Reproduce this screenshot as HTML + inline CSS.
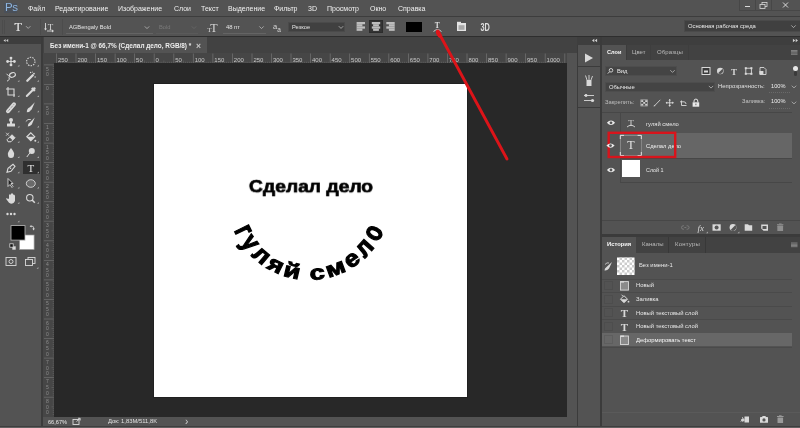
<!DOCTYPE html>
<html><head><meta charset="utf-8">
<style>
*{margin:0;padding:0;box-sizing:border-box}
html,body{width:800px;height:428px;overflow:hidden;background:#535353;font-family:"Liberation Sans",sans-serif;color:#d6d6d6}
.a{position:absolute}
.t{position:absolute;white-space:nowrap;line-height:1;will-change:transform}
svg{position:absolute;left:0;top:0;will-change:transform}
</style></head><body>
<div class="a" style="left:0px;top:0px;width:800px;height:17px;background:#535353;"></div>
<div class="a" style="left:0px;top:16px;width:800px;height:1px;background:#3d3d3d;"></div>
<div class="a" style="left:4px;top:3px;width:13px;height:10px;background:#4a5059;"></div>
<div class="t" style="left:4.6px;top:2.2px;font-size:11.5px;color:#8db4de;letter-spacing:-0.3px">Ps</div>
<div class="t" style="left:28px;top:5.27px;font-size:7px;color:#f0f0f0;">Файл</div>
<div class="t" style="left:54.5px;top:5.27px;font-size:7px;color:#f0f0f0;">Редактирование</div>
<div class="t" style="left:118px;top:5.27px;font-size:7px;color:#f0f0f0;">Изображение</div>
<div class="t" style="left:174px;top:5.27px;font-size:7px;color:#f0f0f0;">Слои</div>
<div class="t" style="left:201px;top:5.27px;font-size:7px;color:#f0f0f0;">Текст</div>
<div class="t" style="left:227.5px;top:5.27px;font-size:7px;color:#f0f0f0;">Выделение</div>
<div class="t" style="left:274px;top:5.27px;font-size:7px;color:#f0f0f0;">Фильтр</div>
<div class="t" style="left:308px;top:5.27px;font-size:7px;color:#f0f0f0;">3D</div>
<div class="t" style="left:327px;top:5.27px;font-size:7px;color:#f0f0f0;">Просмотр</div>
<div class="t" style="left:370px;top:5.27px;font-size:7px;color:#f0f0f0;">Окно</div>
<div class="t" style="left:398px;top:5.27px;font-size:7px;color:#f0f0f0;">Справка</div>
<div class="a" style="left:739px;top:0px;width:1px;height:11px;background:#474747;"></div>
<div class="a" style="left:755px;top:0px;width:1px;height:11px;background:#474747;"></div>
<div class="a" style="left:771px;top:0px;width:1px;height:11px;background:#474747;"></div>
<div class="a" style="left:739px;top:10px;width:61px;height:1px;background:#474747;"></div>
<div class="a" style="left:0px;top:17px;width:800px;height:19px;background:#535353;"></div>
<div class="a" style="left:0px;top:36px;width:800px;height:1px;background:#2e2e2e;"></div>
<div class="a" style="left:40px;top:19px;width:1px;height:16px;background:#4c4c4c;"></div>
<div class="a" style="left:62px;top:19px;width:1px;height:16px;background:#4c4c4c;"></div>
<div class="t" style="left:69px;top:24.73px;font-size:5.75px;color:#e5e5e5;">AGBengaly Bold</div>
<div class="a" style="left:66px;top:33px;width:87px;height:1px;background:#646464;"></div>
<div class="t" style="left:159px;top:24.73px;font-size:5.75px;color:#7a7a7a;">Bold</div>
<div class="a" style="left:156px;top:33px;width:42px;height:1px;background:#5a5a5a;"></div>
<div class="t" style="left:226px;top:24.65px;font-size:5.85px;color:#e5e5e5;">48 пт</div>
<div class="a" style="left:223px;top:33px;width:43px;height:1px;background:#646464;"></div>
<div class="a" style="left:288px;top:22px;width:57px;height:10px;background:#404040;border:1px solid #4a4a4a"></div>
<div class="t" style="left:292px;top:24.57px;font-size:5.7px;color:#e5e5e5;">Резкое</div>
<div class="a" style="left:369px;top:20.4px;width:14px;height:13px;background:#333333;border:1px solid #2c2c2c"></div>
<div class="a" style="left:406px;top:22px;width:16px;height:10px;background:#000000;"></div>
<div class="a" style="left:684px;top:20px;width:117px;height:12px;background:#404040;border:1px solid #4a4a4a"></div>
<div class="t" style="left:688px;top:24.29px;font-size:5.8px;color:#e8e8e8;">Основная рабочая среда</div>
<div class="a" style="left:0px;top:37px;width:41px;height:391px;background:#535353;"></div>
<div class="a" style="left:0px;top:37px;width:41px;height:7px;background:#3e3e3e;"></div>
<div class="a" style="left:41px;top:37px;width:2px;height:391px;background:#3b3b3b;"></div>
<div class="a" style="left:22.5px;top:161.3px;width:17.5px;height:13px;background:#2f2f2f;"></div>
<div class="a" style="left:43px;top:37px;width:534px;height:16px;background:#424242;"></div>
<div class="a" style="left:44px;top:37px;width:163px;height:16px;background:#535353;"></div>
<div class="t" style="left:50px;top:43.08px;font-size:6.4px;color:#eeeeee;font-weight:bold">Без имени-1 @ 66,7% (Сделал дело, RGB/8) *</div>
<div class="t" style="left:195.5px;top:41.60px;font-size:8.5px;color:#c8c8c8;font-weight:bold">×</div>
<div class="a" style="left:43px;top:53px;width:524px;height:10px;background:#464646;"></div>
<div class="a" style="left:43px;top:53px;width:11px;height:364px;background:#464646;"></div>
<div class="a" style="left:54px;top:63px;width:513px;height:354px;background:#282828;"></div>
<div class="a" style="left:153px;top:83px;width:315px;height:315px;background:#202020;"></div>
<div class="a" style="left:154px;top:84px;width:313px;height:313px;background:#ffffff;"></div>
<div class="a" style="left:43px;top:417px;width:524px;height:9px;background:#535353;"></div>
<div class="t" style="left:48px;top:419.66px;font-size:5.6px;color:#e8e8e8;">66,67%</div>
<div class="t" style="left:108px;top:419.45px;font-size:5.85px;color:#e0e0e0;">Док: 1,83M/511,8K</div>
<div class="t" style="left:185px;top:416.54px;font-size:10px;color:#d0d0d0;">›</div>
<div class="a" style="left:567px;top:53px;width:10px;height:372px;background:#535353;"></div>
<div class="a" style="left:577px;top:37px;width:1px;height:391px;background:#3b3b3b;"></div>
<div class="a" style="left:577px;top:37px;width:223px;height:8px;background:#3e3e3e;"></div>
<div class="a" style="left:578px;top:45px;width:22px;height:383px;background:#535353;"></div>
<div class="a" style="left:578px;top:66px;width:22px;height:1px;background:#3b3b3b;"></div>
<div class="a" style="left:578px;top:107px;width:22px;height:1px;background:#3b3b3b;"></div>
<div class="a" style="left:600px;top:37px;width:2px;height:391px;background:#3b3b3b;"></div>
<div class="a" style="left:602px;top:45px;width:198px;height:189px;background:#535353;"></div>
<div class="a" style="left:602px;top:45px;width:198px;height:15px;background:#424242;"></div>
<div class="a" style="left:602px;top:45px;width:25px;height:15px;background:#535353;"></div>
<div class="a" style="left:626px;top:45px;width:1px;height:15px;background:#3c3c3c;"></div>
<div class="a" style="left:650px;top:45px;width:1px;height:15px;background:#3e3e3e;"></div>
<div class="a" style="left:688px;top:45px;width:1px;height:15px;background:#3e3e3e;"></div>
<div class="t" style="left:607px;top:49.96px;font-size:5.6px;color:#f7f7f7;font-weight:bold">Слои</div>
<div class="t" style="left:632px;top:49.12px;font-size:6.0px;color:#bcbcbc;">Цвет</div>
<div class="t" style="left:657px;top:49.12px;font-size:6.0px;color:#bcbcbc;letter-spacing:0.12px">Образцы</div>
<div class="a" style="left:604.5px;top:66px;width:72px;height:10px;background:#444444;border:1px solid #4d4d4d"></div>
<div class="t" style="left:616.5px;top:68.59px;font-size:5.8px;color:#e9e9e9;">Вид</div>
<div class="a" style="left:604.5px;top:81.7px;width:110px;height:10px;background:#444444;border:1px solid #4d4d4d"></div>
<div class="t" style="left:609px;top:84.89px;font-size:5.8px;color:#e9e9e9;">Обычные</div>
<div class="t" style="left:718px;top:83.66px;font-size:5.95px;color:#e0e0e0;">Непрозрачность:</div>
<div class="t" style="left:771px;top:83.92px;font-size:5.65px;color:#ededed;">100%</div>
<div class="a" style="left:769px;top:91.5px;width:21px;height:1px;background:transparent;border-top:1px dotted #6a6a6a"></div>
<div class="t" style="left:605px;top:100.09px;font-size:5.8px;color:#bdbdbd;">Закрепить:</div>
<div class="t" style="left:742px;top:99.42px;font-size:5.65px;color:#c4c4c4;">Заливка:</div>
<div class="t" style="left:771px;top:99.42px;font-size:5.65px;color:#ededed;">100%</div>
<div class="a" style="left:769px;top:107.5px;width:21px;height:1px;background:transparent;border-top:1px dotted #6a6a6a"></div>
<div class="a" style="left:602px;top:112px;width:190px;height:1px;background:#474747;"></div>
<div class="a" style="left:620px;top:112px;width:1px;height:70px;background:#484848;"></div>
<div class="a" style="left:620px;top:133px;width:172px;height:1px;background:#474747;"></div>
<div class="a" style="left:620px;top:133px;width:172px;height:25px;background:#666666;"></div>
<div class="a" style="left:620px;top:158px;width:172px;height:1px;background:#474747;"></div>
<div class="a" style="left:620px;top:182px;width:172px;height:1px;background:#474747;"></div>
<div class="t" style="left:646px;top:121.69px;font-size:5.8px;color:#e8e8e8;">гуляй смело</div>
<div class="t" style="left:646px;top:143.83px;font-size:5.75px;color:#f2f2f2;">Сделал дело</div>
<div class="t" style="left:646px;top:167.53px;font-size:5.4px;color:#e8e8e8;">Слой 1</div>
<div class="a" style="left:622px;top:159.5px;width:18px;height:17px;background:#ffffff;"></div>
<div class="a" style="left:602px;top:220px;width:198px;height:14px;background:#535353;border-top:1px solid #474747"></div>
<div class="a" style="left:602px;top:234px;width:198px;height:3px;background:#3b3b3b;"></div>
<div class="a" style="left:602px;top:237px;width:198px;height:16px;background:#424242;"></div>
<div class="a" style="left:602px;top:237px;width:34px;height:16px;background:#535353;"></div>
<div class="a" style="left:668px;top:237px;width:1px;height:16px;background:#383838;"></div>
<div class="a" style="left:705px;top:237px;width:1px;height:16px;background:#383838;"></div>
<div class="t" style="left:606.8px;top:242.09px;font-size:5.8px;color:#f7f7f7;font-weight:bold">История</div>
<div class="t" style="left:642px;top:241.32px;font-size:6.0px;color:#bcbcbc;letter-spacing:0.05px">Каналы</div>
<div class="t" style="left:674.5px;top:241.32px;font-size:6.0px;color:#bcbcbc;letter-spacing:0.2px">Контуры</div>
<div class="t" style="left:638.6px;top:263.41px;font-size:5.9px;color:#e8e8e8;">Без имени-1</div>
<div class="a" style="left:602px;top:278.5px;width:190px;height:1px;background:#4a4a4a;"></div>
<div class="a" style="left:604px;top:281.0px;width:9px;height:9px;background:transparent;border:1px solid #4d4d4d"></div>
<div class="t" style="left:636.2px;top:283.45px;font-size:5.85px;color:#e7e7e7;">Новый</div>
<div class="a" style="left:602px;top:292.1px;width:190px;height:1px;background:#4a4a4a;"></div>
<div class="a" style="left:604px;top:294.6px;width:9px;height:9px;background:transparent;border:1px solid #4d4d4d"></div>
<div class="t" style="left:636.2px;top:297.05px;font-size:5.85px;color:#e7e7e7;">Заливка</div>
<div class="a" style="left:602px;top:305.7px;width:190px;height:1px;background:#4a4a4a;"></div>
<div class="a" style="left:604px;top:308.2px;width:9px;height:9px;background:transparent;border:1px solid #4d4d4d"></div>
<div class="t" style="left:636.2px;top:310.65px;font-size:5.85px;color:#e7e7e7;">Новый текстовый слой</div>
<div class="a" style="left:602px;top:319.3px;width:190px;height:1px;background:#4a4a4a;"></div>
<div class="a" style="left:604px;top:321.8px;width:9px;height:9px;background:transparent;border:1px solid #4d4d4d"></div>
<div class="t" style="left:636.2px;top:324.25px;font-size:5.85px;color:#e7e7e7;">Новый текстовый слой</div>
<div class="a" style="left:602px;top:332.9px;width:190px;height:1px;background:#4a4a4a;"></div>
<div class="a" style="left:602px;top:332.9px;width:190px;height:13.6px;background:#676767;"></div>
<div class="a" style="left:604px;top:335.4px;width:9px;height:9px;background:transparent;border:1px solid #5e5e5e"></div>
<div class="t" style="left:636.2px;top:337.85px;font-size:5.85px;color:#f7f7f7;">Деформировать текст</div>
<div class="a" style="left:602px;top:346.5px;width:190px;height:1px;background:#4a4a4a;"></div>
<div class="a" style="left:602px;top:412px;width:198px;height:13px;background:#535353;border-top:1px solid #5a5a5a"></div>
<div class="a" style="left:0px;top:426px;width:800px;height:1px;background:#3e3e3e;"></div>
<div class="a" style="left:0px;top:427px;width:800px;height:1px;background:#616161;"></div>
<div class="t" style="left:248.5px;top:177.8px;font-size:18px;font-weight:bold;color:#000;-webkit-text-stroke:0.7px #000;transform:scale(1.07,0.95);transform-origin:0 0">Сделал дело</div>
<svg width="800" height="428">
<g font-family="Liberation Sans" font-weight="bold" font-size="19.5" fill="#000" stroke="#000" stroke-width="0.95"><text transform="translate(236.03,234.19) rotate(63.87) scale(1.109,1.494)" text-anchor="middle">г</text><text transform="translate(243.95,247.13) rotate(53.19) scale(1.198,1.355)" text-anchor="middle">у</text><text transform="translate(256.73,260.66) rotate(40.08) scale(1.285,1.219)" text-anchor="middle">л</text><text transform="translate(272.81,271.23) rotate(26.52) scale(1.350,1.118)" text-anchor="middle">я</text><text transform="translate(290.61,277.65) rotate(13.19) scale(1.388,1.059)" text-anchor="middle">й</text><text transform="translate(317.77,279.35) rotate(-6.04) scale(1.397,1.044)" text-anchor="middle">с</text><text transform="translate(337.68,274.66) rotate(-20.45) scale(1.370,1.087)" text-anchor="middle">м</text><text transform="translate(355.79,265.17) rotate(-34.87) scale(1.313,1.175)" text-anchor="middle">е</text><text transform="translate(369.75,252.85) rotate(-47.98) scale(1.236,1.296)" text-anchor="middle">л</text><text transform="translate(380.96,236.93) rotate(-61.71) scale(1.129,1.464)" text-anchor="middle">о</text></g>
<rect x="56.1" y="53.5" width="0.8" height="9.5" fill="#6e6e6e"/>
<rect x="58.0" y="61.7" width="0.6" height="1.3" fill="#666"/>
<rect x="60.0" y="61.7" width="0.6" height="1.3" fill="#666"/>
<rect x="61.9" y="61.7" width="0.6" height="1.3" fill="#666"/>
<rect x="63.9" y="61.7" width="0.6" height="1.3" fill="#666"/>
<rect x="65.8" y="60.5" width="0.6" height="2.5" fill="#666"/>
<rect x="67.8" y="61.7" width="0.6" height="1.3" fill="#666"/>
<rect x="69.7" y="61.7" width="0.6" height="1.3" fill="#666"/>
<rect x="71.7" y="61.7" width="0.6" height="1.3" fill="#666"/>
<rect x="73.6" y="61.7" width="0.6" height="1.3" fill="#666"/>
<text x="57.9" y="62" font-family="Liberation Sans" font-size="6" fill="#c8c8c8">250</text>
<rect x="75.6" y="53.5" width="0.8" height="9.5" fill="#6e6e6e"/>
<rect x="77.6" y="61.7" width="0.6" height="1.3" fill="#666"/>
<rect x="79.5" y="61.7" width="0.6" height="1.3" fill="#666"/>
<rect x="81.5" y="61.7" width="0.6" height="1.3" fill="#666"/>
<rect x="83.4" y="61.7" width="0.6" height="1.3" fill="#666"/>
<rect x="85.4" y="60.5" width="0.6" height="2.5" fill="#666"/>
<rect x="87.3" y="61.7" width="0.6" height="1.3" fill="#666"/>
<rect x="89.3" y="61.7" width="0.6" height="1.3" fill="#666"/>
<rect x="91.2" y="61.7" width="0.6" height="1.3" fill="#666"/>
<rect x="93.2" y="61.7" width="0.6" height="1.3" fill="#666"/>
<text x="77.4" y="62" font-family="Liberation Sans" font-size="6" fill="#c8c8c8">200</text>
<rect x="95.2" y="53.5" width="0.8" height="9.5" fill="#6e6e6e"/>
<rect x="97.1" y="61.7" width="0.6" height="1.3" fill="#666"/>
<rect x="99.1" y="61.7" width="0.6" height="1.3" fill="#666"/>
<rect x="101.0" y="61.7" width="0.6" height="1.3" fill="#666"/>
<rect x="103.0" y="61.7" width="0.6" height="1.3" fill="#666"/>
<rect x="104.9" y="60.5" width="0.6" height="2.5" fill="#666"/>
<rect x="106.9" y="61.7" width="0.6" height="1.3" fill="#666"/>
<rect x="108.8" y="61.7" width="0.6" height="1.3" fill="#666"/>
<rect x="110.8" y="61.7" width="0.6" height="1.3" fill="#666"/>
<rect x="112.7" y="61.7" width="0.6" height="1.3" fill="#666"/>
<text x="97.0" y="62" font-family="Liberation Sans" font-size="6" fill="#c8c8c8">150</text>
<rect x="114.7" y="53.5" width="0.8" height="9.5" fill="#6e6e6e"/>
<rect x="116.7" y="61.7" width="0.6" height="1.3" fill="#666"/>
<rect x="118.6" y="61.7" width="0.6" height="1.3" fill="#666"/>
<rect x="120.6" y="61.7" width="0.6" height="1.3" fill="#666"/>
<rect x="122.5" y="61.7" width="0.6" height="1.3" fill="#666"/>
<rect x="124.5" y="60.5" width="0.6" height="2.5" fill="#666"/>
<rect x="126.4" y="61.7" width="0.6" height="1.3" fill="#666"/>
<rect x="128.4" y="61.7" width="0.6" height="1.3" fill="#666"/>
<rect x="130.3" y="61.7" width="0.6" height="1.3" fill="#666"/>
<rect x="132.3" y="61.7" width="0.6" height="1.3" fill="#666"/>
<text x="116.5" y="62" font-family="Liberation Sans" font-size="6" fill="#c8c8c8">100</text>
<rect x="134.2" y="53.5" width="0.8" height="9.5" fill="#6e6e6e"/>
<rect x="136.2" y="61.7" width="0.6" height="1.3" fill="#666"/>
<rect x="138.2" y="61.7" width="0.6" height="1.3" fill="#666"/>
<rect x="140.1" y="61.7" width="0.6" height="1.3" fill="#666"/>
<rect x="142.1" y="61.7" width="0.6" height="1.3" fill="#666"/>
<rect x="144.0" y="60.5" width="0.6" height="2.5" fill="#666"/>
<rect x="146.0" y="61.7" width="0.6" height="1.3" fill="#666"/>
<rect x="147.9" y="61.7" width="0.6" height="1.3" fill="#666"/>
<rect x="149.9" y="61.7" width="0.6" height="1.3" fill="#666"/>
<rect x="151.8" y="61.7" width="0.6" height="1.3" fill="#666"/>
<text x="136.1" y="62" font-family="Liberation Sans" font-size="6" fill="#c8c8c8">50</text>
<rect x="153.8" y="53.5" width="0.8" height="9.5" fill="#6e6e6e"/>
<rect x="155.8" y="61.7" width="0.6" height="1.3" fill="#666"/>
<rect x="157.7" y="61.7" width="0.6" height="1.3" fill="#666"/>
<rect x="159.7" y="61.7" width="0.6" height="1.3" fill="#666"/>
<rect x="161.6" y="61.7" width="0.6" height="1.3" fill="#666"/>
<rect x="163.6" y="60.5" width="0.6" height="2.5" fill="#666"/>
<rect x="165.5" y="61.7" width="0.6" height="1.3" fill="#666"/>
<rect x="167.5" y="61.7" width="0.6" height="1.3" fill="#666"/>
<rect x="169.4" y="61.7" width="0.6" height="1.3" fill="#666"/>
<rect x="171.4" y="61.7" width="0.6" height="1.3" fill="#666"/>
<text x="155.6" y="62" font-family="Liberation Sans" font-size="6" fill="#c8c8c8">0</text>
<rect x="173.4" y="53.5" width="0.8" height="9.5" fill="#6e6e6e"/>
<rect x="175.3" y="61.7" width="0.6" height="1.3" fill="#666"/>
<rect x="177.3" y="61.7" width="0.6" height="1.3" fill="#666"/>
<rect x="179.2" y="61.7" width="0.6" height="1.3" fill="#666"/>
<rect x="181.2" y="61.7" width="0.6" height="1.3" fill="#666"/>
<rect x="183.1" y="60.5" width="0.6" height="2.5" fill="#666"/>
<rect x="185.1" y="61.7" width="0.6" height="1.3" fill="#666"/>
<rect x="187.0" y="61.7" width="0.6" height="1.3" fill="#666"/>
<rect x="189.0" y="61.7" width="0.6" height="1.3" fill="#666"/>
<rect x="190.9" y="61.7" width="0.6" height="1.3" fill="#666"/>
<text x="175.2" y="62" font-family="Liberation Sans" font-size="6" fill="#c8c8c8">50</text>
<rect x="192.9" y="53.5" width="0.8" height="9.5" fill="#6e6e6e"/>
<rect x="194.9" y="61.7" width="0.6" height="1.3" fill="#666"/>
<rect x="196.8" y="61.7" width="0.6" height="1.3" fill="#666"/>
<rect x="198.8" y="61.7" width="0.6" height="1.3" fill="#666"/>
<rect x="200.7" y="61.7" width="0.6" height="1.3" fill="#666"/>
<rect x="202.7" y="60.5" width="0.6" height="2.5" fill="#666"/>
<rect x="204.6" y="61.7" width="0.6" height="1.3" fill="#666"/>
<rect x="206.6" y="61.7" width="0.6" height="1.3" fill="#666"/>
<rect x="208.5" y="61.7" width="0.6" height="1.3" fill="#666"/>
<rect x="210.5" y="61.7" width="0.6" height="1.3" fill="#666"/>
<text x="194.7" y="62" font-family="Liberation Sans" font-size="6" fill="#c8c8c8">100</text>
<rect x="212.5" y="53.5" width="0.8" height="9.5" fill="#6e6e6e"/>
<rect x="214.4" y="61.7" width="0.6" height="1.3" fill="#666"/>
<rect x="216.4" y="61.7" width="0.6" height="1.3" fill="#666"/>
<rect x="218.3" y="61.7" width="0.6" height="1.3" fill="#666"/>
<rect x="220.3" y="61.7" width="0.6" height="1.3" fill="#666"/>
<rect x="222.2" y="60.5" width="0.6" height="2.5" fill="#666"/>
<rect x="224.2" y="61.7" width="0.6" height="1.3" fill="#666"/>
<rect x="226.1" y="61.7" width="0.6" height="1.3" fill="#666"/>
<rect x="228.1" y="61.7" width="0.6" height="1.3" fill="#666"/>
<rect x="230.0" y="61.7" width="0.6" height="1.3" fill="#666"/>
<text x="214.3" y="62" font-family="Liberation Sans" font-size="6" fill="#c8c8c8">150</text>
<rect x="232.0" y="53.5" width="0.8" height="9.5" fill="#6e6e6e"/>
<rect x="234.0" y="61.7" width="0.6" height="1.3" fill="#666"/>
<rect x="235.9" y="61.7" width="0.6" height="1.3" fill="#666"/>
<rect x="237.9" y="61.7" width="0.6" height="1.3" fill="#666"/>
<rect x="239.8" y="61.7" width="0.6" height="1.3" fill="#666"/>
<rect x="241.8" y="60.5" width="0.6" height="2.5" fill="#666"/>
<rect x="243.7" y="61.7" width="0.6" height="1.3" fill="#666"/>
<rect x="245.7" y="61.7" width="0.6" height="1.3" fill="#666"/>
<rect x="247.6" y="61.7" width="0.6" height="1.3" fill="#666"/>
<rect x="249.6" y="61.7" width="0.6" height="1.3" fill="#666"/>
<text x="233.8" y="62" font-family="Liberation Sans" font-size="6" fill="#c8c8c8">200</text>
<rect x="251.6" y="53.5" width="0.8" height="9.5" fill="#6e6e6e"/>
<rect x="253.5" y="61.7" width="0.6" height="1.3" fill="#666"/>
<rect x="255.5" y="61.7" width="0.6" height="1.3" fill="#666"/>
<rect x="257.4" y="61.7" width="0.6" height="1.3" fill="#666"/>
<rect x="259.4" y="61.7" width="0.6" height="1.3" fill="#666"/>
<rect x="261.3" y="60.5" width="0.6" height="2.5" fill="#666"/>
<rect x="263.3" y="61.7" width="0.6" height="1.3" fill="#666"/>
<rect x="265.2" y="61.7" width="0.6" height="1.3" fill="#666"/>
<rect x="267.2" y="61.7" width="0.6" height="1.3" fill="#666"/>
<rect x="269.1" y="61.7" width="0.6" height="1.3" fill="#666"/>
<text x="253.4" y="62" font-family="Liberation Sans" font-size="6" fill="#c8c8c8">250</text>
<rect x="271.1" y="53.5" width="0.8" height="9.5" fill="#6e6e6e"/>
<rect x="273.1" y="61.7" width="0.6" height="1.3" fill="#666"/>
<rect x="275.0" y="61.7" width="0.6" height="1.3" fill="#666"/>
<rect x="277.0" y="61.7" width="0.6" height="1.3" fill="#666"/>
<rect x="278.9" y="61.7" width="0.6" height="1.3" fill="#666"/>
<rect x="280.9" y="60.5" width="0.6" height="2.5" fill="#666"/>
<rect x="282.8" y="61.7" width="0.6" height="1.3" fill="#666"/>
<rect x="284.8" y="61.7" width="0.6" height="1.3" fill="#666"/>
<rect x="286.7" y="61.7" width="0.6" height="1.3" fill="#666"/>
<rect x="288.7" y="61.7" width="0.6" height="1.3" fill="#666"/>
<text x="272.9" y="62" font-family="Liberation Sans" font-size="6" fill="#c8c8c8">300</text>
<rect x="290.6" y="53.5" width="0.8" height="9.5" fill="#6e6e6e"/>
<rect x="292.6" y="61.7" width="0.6" height="1.3" fill="#666"/>
<rect x="294.6" y="61.7" width="0.6" height="1.3" fill="#666"/>
<rect x="296.5" y="61.7" width="0.6" height="1.3" fill="#666"/>
<rect x="298.5" y="61.7" width="0.6" height="1.3" fill="#666"/>
<rect x="300.4" y="60.5" width="0.6" height="2.5" fill="#666"/>
<rect x="302.4" y="61.7" width="0.6" height="1.3" fill="#666"/>
<rect x="304.3" y="61.7" width="0.6" height="1.3" fill="#666"/>
<rect x="306.3" y="61.7" width="0.6" height="1.3" fill="#666"/>
<rect x="308.2" y="61.7" width="0.6" height="1.3" fill="#666"/>
<text x="292.4" y="62" font-family="Liberation Sans" font-size="6" fill="#c8c8c8">350</text>
<rect x="310.2" y="53.5" width="0.8" height="9.5" fill="#6e6e6e"/>
<rect x="312.2" y="61.7" width="0.6" height="1.3" fill="#666"/>
<rect x="314.1" y="61.7" width="0.6" height="1.3" fill="#666"/>
<rect x="316.1" y="61.7" width="0.6" height="1.3" fill="#666"/>
<rect x="318.0" y="61.7" width="0.6" height="1.3" fill="#666"/>
<rect x="320.0" y="60.5" width="0.6" height="2.5" fill="#666"/>
<rect x="321.9" y="61.7" width="0.6" height="1.3" fill="#666"/>
<rect x="323.9" y="61.7" width="0.6" height="1.3" fill="#666"/>
<rect x="325.8" y="61.7" width="0.6" height="1.3" fill="#666"/>
<rect x="327.8" y="61.7" width="0.6" height="1.3" fill="#666"/>
<text x="312.0" y="62" font-family="Liberation Sans" font-size="6" fill="#c8c8c8">400</text>
<rect x="329.8" y="53.5" width="0.8" height="9.5" fill="#6e6e6e"/>
<rect x="331.7" y="61.7" width="0.6" height="1.3" fill="#666"/>
<rect x="333.7" y="61.7" width="0.6" height="1.3" fill="#666"/>
<rect x="335.6" y="61.7" width="0.6" height="1.3" fill="#666"/>
<rect x="337.6" y="61.7" width="0.6" height="1.3" fill="#666"/>
<rect x="339.5" y="60.5" width="0.6" height="2.5" fill="#666"/>
<rect x="341.5" y="61.7" width="0.6" height="1.3" fill="#666"/>
<rect x="343.4" y="61.7" width="0.6" height="1.3" fill="#666"/>
<rect x="345.4" y="61.7" width="0.6" height="1.3" fill="#666"/>
<rect x="347.3" y="61.7" width="0.6" height="1.3" fill="#666"/>
<text x="331.6" y="62" font-family="Liberation Sans" font-size="6" fill="#c8c8c8">450</text>
<rect x="349.3" y="53.5" width="0.8" height="9.5" fill="#6e6e6e"/>
<rect x="351.3" y="61.7" width="0.6" height="1.3" fill="#666"/>
<rect x="353.2" y="61.7" width="0.6" height="1.3" fill="#666"/>
<rect x="355.2" y="61.7" width="0.6" height="1.3" fill="#666"/>
<rect x="357.1" y="61.7" width="0.6" height="1.3" fill="#666"/>
<rect x="359.1" y="60.5" width="0.6" height="2.5" fill="#666"/>
<rect x="361.0" y="61.7" width="0.6" height="1.3" fill="#666"/>
<rect x="363.0" y="61.7" width="0.6" height="1.3" fill="#666"/>
<rect x="364.9" y="61.7" width="0.6" height="1.3" fill="#666"/>
<rect x="366.9" y="61.7" width="0.6" height="1.3" fill="#666"/>
<text x="351.1" y="62" font-family="Liberation Sans" font-size="6" fill="#c8c8c8">500</text>
<rect x="368.9" y="53.5" width="0.8" height="9.5" fill="#6e6e6e"/>
<rect x="370.8" y="61.7" width="0.6" height="1.3" fill="#666"/>
<rect x="372.8" y="61.7" width="0.6" height="1.3" fill="#666"/>
<rect x="374.7" y="61.7" width="0.6" height="1.3" fill="#666"/>
<rect x="376.7" y="61.7" width="0.6" height="1.3" fill="#666"/>
<rect x="378.6" y="60.5" width="0.6" height="2.5" fill="#666"/>
<rect x="380.6" y="61.7" width="0.6" height="1.3" fill="#666"/>
<rect x="382.5" y="61.7" width="0.6" height="1.3" fill="#666"/>
<rect x="384.5" y="61.7" width="0.6" height="1.3" fill="#666"/>
<rect x="386.4" y="61.7" width="0.6" height="1.3" fill="#666"/>
<text x="370.7" y="62" font-family="Liberation Sans" font-size="6" fill="#c8c8c8">550</text>
<rect x="388.4" y="53.5" width="0.8" height="9.5" fill="#6e6e6e"/>
<rect x="390.4" y="61.7" width="0.6" height="1.3" fill="#666"/>
<rect x="392.3" y="61.7" width="0.6" height="1.3" fill="#666"/>
<rect x="394.3" y="61.7" width="0.6" height="1.3" fill="#666"/>
<rect x="396.2" y="61.7" width="0.6" height="1.3" fill="#666"/>
<rect x="398.2" y="60.5" width="0.6" height="2.5" fill="#666"/>
<rect x="400.1" y="61.7" width="0.6" height="1.3" fill="#666"/>
<rect x="402.1" y="61.7" width="0.6" height="1.3" fill="#666"/>
<rect x="404.0" y="61.7" width="0.6" height="1.3" fill="#666"/>
<rect x="406.0" y="61.7" width="0.6" height="1.3" fill="#666"/>
<text x="390.2" y="62" font-family="Liberation Sans" font-size="6" fill="#c8c8c8">600</text>
<rect x="408.0" y="53.5" width="0.8" height="9.5" fill="#6e6e6e"/>
<rect x="409.9" y="61.7" width="0.6" height="1.3" fill="#666"/>
<rect x="411.9" y="61.7" width="0.6" height="1.3" fill="#666"/>
<rect x="413.8" y="61.7" width="0.6" height="1.3" fill="#666"/>
<rect x="415.8" y="61.7" width="0.6" height="1.3" fill="#666"/>
<rect x="417.7" y="60.5" width="0.6" height="2.5" fill="#666"/>
<rect x="419.7" y="61.7" width="0.6" height="1.3" fill="#666"/>
<rect x="421.6" y="61.7" width="0.6" height="1.3" fill="#666"/>
<rect x="423.6" y="61.7" width="0.6" height="1.3" fill="#666"/>
<rect x="425.5" y="61.7" width="0.6" height="1.3" fill="#666"/>
<text x="409.8" y="62" font-family="Liberation Sans" font-size="6" fill="#c8c8c8">650</text>
<rect x="427.5" y="53.5" width="0.8" height="9.5" fill="#6e6e6e"/>
<rect x="429.5" y="61.7" width="0.6" height="1.3" fill="#666"/>
<rect x="431.4" y="61.7" width="0.6" height="1.3" fill="#666"/>
<rect x="433.4" y="61.7" width="0.6" height="1.3" fill="#666"/>
<rect x="435.3" y="61.7" width="0.6" height="1.3" fill="#666"/>
<rect x="437.3" y="60.5" width="0.6" height="2.5" fill="#666"/>
<rect x="439.2" y="61.7" width="0.6" height="1.3" fill="#666"/>
<rect x="441.2" y="61.7" width="0.6" height="1.3" fill="#666"/>
<rect x="443.1" y="61.7" width="0.6" height="1.3" fill="#666"/>
<rect x="445.1" y="61.7" width="0.6" height="1.3" fill="#666"/>
<text x="429.3" y="62" font-family="Liberation Sans" font-size="6" fill="#c8c8c8">700</text>
<rect x="447.1" y="53.5" width="0.8" height="9.5" fill="#6e6e6e"/>
<rect x="449.0" y="61.7" width="0.6" height="1.3" fill="#666"/>
<rect x="451.0" y="61.7" width="0.6" height="1.3" fill="#666"/>
<rect x="452.9" y="61.7" width="0.6" height="1.3" fill="#666"/>
<rect x="454.9" y="61.7" width="0.6" height="1.3" fill="#666"/>
<rect x="456.8" y="60.5" width="0.6" height="2.5" fill="#666"/>
<rect x="458.8" y="61.7" width="0.6" height="1.3" fill="#666"/>
<rect x="460.7" y="61.7" width="0.6" height="1.3" fill="#666"/>
<rect x="462.7" y="61.7" width="0.6" height="1.3" fill="#666"/>
<rect x="464.6" y="61.7" width="0.6" height="1.3" fill="#666"/>
<text x="448.9" y="62" font-family="Liberation Sans" font-size="6" fill="#c8c8c8">750</text>
<rect x="466.6" y="53.5" width="0.8" height="9.5" fill="#6e6e6e"/>
<rect x="468.6" y="61.7" width="0.6" height="1.3" fill="#666"/>
<rect x="470.5" y="61.7" width="0.6" height="1.3" fill="#666"/>
<rect x="472.5" y="61.7" width="0.6" height="1.3" fill="#666"/>
<rect x="474.4" y="61.7" width="0.6" height="1.3" fill="#666"/>
<rect x="476.4" y="60.5" width="0.6" height="2.5" fill="#666"/>
<rect x="478.3" y="61.7" width="0.6" height="1.3" fill="#666"/>
<rect x="480.3" y="61.7" width="0.6" height="1.3" fill="#666"/>
<rect x="482.2" y="61.7" width="0.6" height="1.3" fill="#666"/>
<rect x="484.2" y="61.7" width="0.6" height="1.3" fill="#666"/>
<text x="468.4" y="62" font-family="Liberation Sans" font-size="6" fill="#c8c8c8">800</text>
<rect x="486.2" y="53.5" width="0.8" height="9.5" fill="#6e6e6e"/>
<rect x="488.1" y="61.7" width="0.6" height="1.3" fill="#666"/>
<rect x="490.1" y="61.7" width="0.6" height="1.3" fill="#666"/>
<rect x="492.0" y="61.7" width="0.6" height="1.3" fill="#666"/>
<rect x="494.0" y="61.7" width="0.6" height="1.3" fill="#666"/>
<rect x="495.9" y="60.5" width="0.6" height="2.5" fill="#666"/>
<rect x="497.9" y="61.7" width="0.6" height="1.3" fill="#666"/>
<rect x="499.8" y="61.7" width="0.6" height="1.3" fill="#666"/>
<rect x="501.8" y="61.7" width="0.6" height="1.3" fill="#666"/>
<rect x="503.7" y="61.7" width="0.6" height="1.3" fill="#666"/>
<text x="488.0" y="62" font-family="Liberation Sans" font-size="6" fill="#c8c8c8">850</text>
<rect x="505.7" y="53.5" width="0.8" height="9.5" fill="#6e6e6e"/>
<rect x="507.7" y="61.7" width="0.6" height="1.3" fill="#666"/>
<rect x="509.6" y="61.7" width="0.6" height="1.3" fill="#666"/>
<rect x="511.6" y="61.7" width="0.6" height="1.3" fill="#666"/>
<rect x="513.5" y="61.7" width="0.6" height="1.3" fill="#666"/>
<rect x="515.5" y="60.5" width="0.6" height="2.5" fill="#666"/>
<rect x="517.4" y="61.7" width="0.6" height="1.3" fill="#666"/>
<rect x="519.4" y="61.7" width="0.6" height="1.3" fill="#666"/>
<rect x="521.3" y="61.7" width="0.6" height="1.3" fill="#666"/>
<rect x="523.3" y="61.7" width="0.6" height="1.3" fill="#666"/>
<text x="507.5" y="62" font-family="Liberation Sans" font-size="6" fill="#c8c8c8">900</text>
<rect x="525.2" y="53.5" width="0.8" height="9.5" fill="#6e6e6e"/>
<rect x="527.2" y="61.7" width="0.6" height="1.3" fill="#666"/>
<rect x="529.2" y="61.7" width="0.6" height="1.3" fill="#666"/>
<rect x="531.1" y="61.7" width="0.6" height="1.3" fill="#666"/>
<rect x="533.1" y="61.7" width="0.6" height="1.3" fill="#666"/>
<rect x="535.0" y="60.5" width="0.6" height="2.5" fill="#666"/>
<rect x="537.0" y="61.7" width="0.6" height="1.3" fill="#666"/>
<rect x="538.9" y="61.7" width="0.6" height="1.3" fill="#666"/>
<rect x="540.9" y="61.7" width="0.6" height="1.3" fill="#666"/>
<rect x="542.8" y="61.7" width="0.6" height="1.3" fill="#666"/>
<text x="527.0" y="62" font-family="Liberation Sans" font-size="6" fill="#c8c8c8">950</text>
<rect x="544.8" y="53.5" width="0.8" height="9.5" fill="#6e6e6e"/>
<rect x="546.8" y="61.7" width="0.6" height="1.3" fill="#666"/>
<rect x="548.7" y="61.7" width="0.6" height="1.3" fill="#666"/>
<rect x="550.7" y="61.7" width="0.6" height="1.3" fill="#666"/>
<rect x="552.6" y="61.7" width="0.6" height="1.3" fill="#666"/>
<rect x="554.6" y="60.5" width="0.6" height="2.5" fill="#666"/>
<rect x="556.5" y="61.7" width="0.6" height="1.3" fill="#666"/>
<rect x="558.5" y="61.7" width="0.6" height="1.3" fill="#666"/>
<rect x="560.4" y="61.7" width="0.6" height="1.3" fill="#666"/>
<rect x="562.4" y="61.7" width="0.6" height="1.3" fill="#666"/>
<text x="546.6" y="62" font-family="Liberation Sans" font-size="6" fill="#c8c8c8">1000</text>
<rect x="564.4" y="53.5" width="0.8" height="9.5" fill="#6e6e6e"/>
<rect x="44" y="64.5" width="10" height="0.8" fill="#6a6a6a"/>
<rect x="52.7" y="66.4" width="1.3" height="0.6" fill="#666"/>
<rect x="52.7" y="68.4" width="1.3" height="0.6" fill="#666"/>
<rect x="52.7" y="70.3" width="1.3" height="0.6" fill="#666"/>
<rect x="52.7" y="72.3" width="1.3" height="0.6" fill="#666"/>
<rect x="51.5" y="74.2" width="2.5" height="0.6" fill="#666"/>
<rect x="52.7" y="76.2" width="1.3" height="0.6" fill="#666"/>
<rect x="52.7" y="78.1" width="1.3" height="0.6" fill="#666"/>
<rect x="52.7" y="80.1" width="1.3" height="0.6" fill="#666"/>
<rect x="52.7" y="82.0" width="1.3" height="0.6" fill="#666"/>
<text x="47.5" y="70.7" font-family="Liberation Sans" font-size="5" fill="#8c8c8c" text-anchor="middle">5</text>
<text x="47.5" y="76.2" font-family="Liberation Sans" font-size="5" fill="#8c8c8c" text-anchor="middle">0</text>
<rect x="44" y="84.0" width="10" height="0.8" fill="#6a6a6a"/>
<rect x="52.7" y="86.0" width="1.3" height="0.6" fill="#666"/>
<rect x="52.7" y="87.9" width="1.3" height="0.6" fill="#666"/>
<rect x="52.7" y="89.9" width="1.3" height="0.6" fill="#666"/>
<rect x="52.7" y="91.8" width="1.3" height="0.6" fill="#666"/>
<rect x="51.5" y="93.8" width="2.5" height="0.6" fill="#666"/>
<rect x="52.7" y="95.7" width="1.3" height="0.6" fill="#666"/>
<rect x="52.7" y="97.7" width="1.3" height="0.6" fill="#666"/>
<rect x="52.7" y="99.6" width="1.3" height="0.6" fill="#666"/>
<rect x="52.7" y="101.6" width="1.3" height="0.6" fill="#666"/>
<text x="47.5" y="90.2" font-family="Liberation Sans" font-size="5" fill="#8c8c8c" text-anchor="middle">0</text>
<rect x="44" y="103.5" width="10" height="0.8" fill="#6a6a6a"/>
<rect x="52.7" y="105.5" width="1.3" height="0.6" fill="#666"/>
<rect x="52.7" y="107.5" width="1.3" height="0.6" fill="#666"/>
<rect x="52.7" y="109.4" width="1.3" height="0.6" fill="#666"/>
<rect x="52.7" y="111.4" width="1.3" height="0.6" fill="#666"/>
<rect x="51.5" y="113.3" width="2.5" height="0.6" fill="#666"/>
<rect x="52.7" y="115.3" width="1.3" height="0.6" fill="#666"/>
<rect x="52.7" y="117.2" width="1.3" height="0.6" fill="#666"/>
<rect x="52.7" y="119.2" width="1.3" height="0.6" fill="#666"/>
<rect x="52.7" y="121.1" width="1.3" height="0.6" fill="#666"/>
<text x="47.5" y="109.8" font-family="Liberation Sans" font-size="5" fill="#8c8c8c" text-anchor="middle">5</text>
<text x="47.5" y="115.3" font-family="Liberation Sans" font-size="5" fill="#8c8c8c" text-anchor="middle">0</text>
<rect x="44" y="123.1" width="10" height="0.8" fill="#6a6a6a"/>
<rect x="52.7" y="125.1" width="1.3" height="0.6" fill="#666"/>
<rect x="52.7" y="127.0" width="1.3" height="0.6" fill="#666"/>
<rect x="52.7" y="129.0" width="1.3" height="0.6" fill="#666"/>
<rect x="52.7" y="130.9" width="1.3" height="0.6" fill="#666"/>
<rect x="51.5" y="132.9" width="2.5" height="0.6" fill="#666"/>
<rect x="52.7" y="134.8" width="1.3" height="0.6" fill="#666"/>
<rect x="52.7" y="136.8" width="1.3" height="0.6" fill="#666"/>
<rect x="52.7" y="138.7" width="1.3" height="0.6" fill="#666"/>
<rect x="52.7" y="140.7" width="1.3" height="0.6" fill="#666"/>
<text x="47.5" y="129.3" font-family="Liberation Sans" font-size="5" fill="#8c8c8c" text-anchor="middle">1</text>
<text x="47.5" y="134.9" font-family="Liberation Sans" font-size="5" fill="#8c8c8c" text-anchor="middle">0</text>
<text x="47.5" y="140.5" font-family="Liberation Sans" font-size="5" fill="#8c8c8c" text-anchor="middle">0</text>
<rect x="44" y="142.7" width="10" height="0.8" fill="#6a6a6a"/>
<rect x="52.7" y="144.6" width="1.3" height="0.6" fill="#666"/>
<rect x="52.7" y="146.6" width="1.3" height="0.6" fill="#666"/>
<rect x="52.7" y="148.5" width="1.3" height="0.6" fill="#666"/>
<rect x="52.7" y="150.5" width="1.3" height="0.6" fill="#666"/>
<rect x="51.5" y="152.4" width="2.5" height="0.6" fill="#666"/>
<rect x="52.7" y="154.4" width="1.3" height="0.6" fill="#666"/>
<rect x="52.7" y="156.3" width="1.3" height="0.6" fill="#666"/>
<rect x="52.7" y="158.3" width="1.3" height="0.6" fill="#666"/>
<rect x="52.7" y="160.2" width="1.3" height="0.6" fill="#666"/>
<text x="47.5" y="148.8" font-family="Liberation Sans" font-size="5" fill="#8c8c8c" text-anchor="middle">1</text>
<text x="47.5" y="154.4" font-family="Liberation Sans" font-size="5" fill="#8c8c8c" text-anchor="middle">5</text>
<text x="47.5" y="160.0" font-family="Liberation Sans" font-size="5" fill="#8c8c8c" text-anchor="middle">0</text>
<rect x="44" y="162.2" width="10" height="0.8" fill="#6a6a6a"/>
<rect x="52.7" y="164.2" width="1.3" height="0.6" fill="#666"/>
<rect x="52.7" y="166.1" width="1.3" height="0.6" fill="#666"/>
<rect x="52.7" y="168.1" width="1.3" height="0.6" fill="#666"/>
<rect x="52.7" y="170.0" width="1.3" height="0.6" fill="#666"/>
<rect x="51.5" y="172.0" width="2.5" height="0.6" fill="#666"/>
<rect x="52.7" y="173.9" width="1.3" height="0.6" fill="#666"/>
<rect x="52.7" y="175.9" width="1.3" height="0.6" fill="#666"/>
<rect x="52.7" y="177.8" width="1.3" height="0.6" fill="#666"/>
<rect x="52.7" y="179.8" width="1.3" height="0.6" fill="#666"/>
<text x="47.5" y="168.4" font-family="Liberation Sans" font-size="5" fill="#8c8c8c" text-anchor="middle">2</text>
<text x="47.5" y="174.0" font-family="Liberation Sans" font-size="5" fill="#8c8c8c" text-anchor="middle">0</text>
<text x="47.5" y="179.6" font-family="Liberation Sans" font-size="5" fill="#8c8c8c" text-anchor="middle">0</text>
<rect x="44" y="181.8" width="10" height="0.8" fill="#6a6a6a"/>
<rect x="52.7" y="183.7" width="1.3" height="0.6" fill="#666"/>
<rect x="52.7" y="185.7" width="1.3" height="0.6" fill="#666"/>
<rect x="52.7" y="187.6" width="1.3" height="0.6" fill="#666"/>
<rect x="52.7" y="189.6" width="1.3" height="0.6" fill="#666"/>
<rect x="51.5" y="191.5" width="2.5" height="0.6" fill="#666"/>
<rect x="52.7" y="193.5" width="1.3" height="0.6" fill="#666"/>
<rect x="52.7" y="195.4" width="1.3" height="0.6" fill="#666"/>
<rect x="52.7" y="197.4" width="1.3" height="0.6" fill="#666"/>
<rect x="52.7" y="199.3" width="1.3" height="0.6" fill="#666"/>
<text x="47.5" y="187.9" font-family="Liberation Sans" font-size="5" fill="#8c8c8c" text-anchor="middle">2</text>
<text x="47.5" y="193.5" font-family="Liberation Sans" font-size="5" fill="#8c8c8c" text-anchor="middle">5</text>
<text x="47.5" y="199.1" font-family="Liberation Sans" font-size="5" fill="#8c8c8c" text-anchor="middle">0</text>
<rect x="44" y="201.3" width="10" height="0.8" fill="#6a6a6a"/>
<rect x="52.7" y="203.3" width="1.3" height="0.6" fill="#666"/>
<rect x="52.7" y="205.2" width="1.3" height="0.6" fill="#666"/>
<rect x="52.7" y="207.2" width="1.3" height="0.6" fill="#666"/>
<rect x="52.7" y="209.1" width="1.3" height="0.6" fill="#666"/>
<rect x="51.5" y="211.1" width="2.5" height="0.6" fill="#666"/>
<rect x="52.7" y="213.0" width="1.3" height="0.6" fill="#666"/>
<rect x="52.7" y="215.0" width="1.3" height="0.6" fill="#666"/>
<rect x="52.7" y="216.9" width="1.3" height="0.6" fill="#666"/>
<rect x="52.7" y="218.9" width="1.3" height="0.6" fill="#666"/>
<text x="47.5" y="207.5" font-family="Liberation Sans" font-size="5" fill="#8c8c8c" text-anchor="middle">3</text>
<text x="47.5" y="213.1" font-family="Liberation Sans" font-size="5" fill="#8c8c8c" text-anchor="middle">0</text>
<text x="47.5" y="218.7" font-family="Liberation Sans" font-size="5" fill="#8c8c8c" text-anchor="middle">0</text>
<rect x="44" y="220.8" width="10" height="0.8" fill="#6a6a6a"/>
<rect x="52.7" y="222.8" width="1.3" height="0.6" fill="#666"/>
<rect x="52.7" y="224.8" width="1.3" height="0.6" fill="#666"/>
<rect x="52.7" y="226.7" width="1.3" height="0.6" fill="#666"/>
<rect x="52.7" y="228.7" width="1.3" height="0.6" fill="#666"/>
<rect x="51.5" y="230.6" width="2.5" height="0.6" fill="#666"/>
<rect x="52.7" y="232.6" width="1.3" height="0.6" fill="#666"/>
<rect x="52.7" y="234.5" width="1.3" height="0.6" fill="#666"/>
<rect x="52.7" y="236.5" width="1.3" height="0.6" fill="#666"/>
<rect x="52.7" y="238.4" width="1.3" height="0.6" fill="#666"/>
<text x="47.5" y="227.0" font-family="Liberation Sans" font-size="5" fill="#8c8c8c" text-anchor="middle">3</text>
<text x="47.5" y="232.6" font-family="Liberation Sans" font-size="5" fill="#8c8c8c" text-anchor="middle">5</text>
<text x="47.5" y="238.2" font-family="Liberation Sans" font-size="5" fill="#8c8c8c" text-anchor="middle">0</text>
<rect x="44" y="240.4" width="10" height="0.8" fill="#6a6a6a"/>
<rect x="52.7" y="242.4" width="1.3" height="0.6" fill="#666"/>
<rect x="52.7" y="244.3" width="1.3" height="0.6" fill="#666"/>
<rect x="52.7" y="246.3" width="1.3" height="0.6" fill="#666"/>
<rect x="52.7" y="248.2" width="1.3" height="0.6" fill="#666"/>
<rect x="51.5" y="250.2" width="2.5" height="0.6" fill="#666"/>
<rect x="52.7" y="252.1" width="1.3" height="0.6" fill="#666"/>
<rect x="52.7" y="254.1" width="1.3" height="0.6" fill="#666"/>
<rect x="52.7" y="256.0" width="1.3" height="0.6" fill="#666"/>
<rect x="52.7" y="258.0" width="1.3" height="0.6" fill="#666"/>
<text x="47.5" y="246.6" font-family="Liberation Sans" font-size="5" fill="#8c8c8c" text-anchor="middle">4</text>
<text x="47.5" y="252.2" font-family="Liberation Sans" font-size="5" fill="#8c8c8c" text-anchor="middle">0</text>
<text x="47.5" y="257.8" font-family="Liberation Sans" font-size="5" fill="#8c8c8c" text-anchor="middle">0</text>
<rect x="44" y="260.0" width="10" height="0.8" fill="#6a6a6a"/>
<rect x="52.7" y="261.9" width="1.3" height="0.6" fill="#666"/>
<rect x="52.7" y="263.9" width="1.3" height="0.6" fill="#666"/>
<rect x="52.7" y="265.8" width="1.3" height="0.6" fill="#666"/>
<rect x="52.7" y="267.8" width="1.3" height="0.6" fill="#666"/>
<rect x="51.5" y="269.7" width="2.5" height="0.6" fill="#666"/>
<rect x="52.7" y="271.7" width="1.3" height="0.6" fill="#666"/>
<rect x="52.7" y="273.6" width="1.3" height="0.6" fill="#666"/>
<rect x="52.7" y="275.6" width="1.3" height="0.6" fill="#666"/>
<rect x="52.7" y="277.5" width="1.3" height="0.6" fill="#666"/>
<text x="47.5" y="266.2" font-family="Liberation Sans" font-size="5" fill="#8c8c8c" text-anchor="middle">4</text>
<text x="47.5" y="271.8" font-family="Liberation Sans" font-size="5" fill="#8c8c8c" text-anchor="middle">5</text>
<text x="47.5" y="277.4" font-family="Liberation Sans" font-size="5" fill="#8c8c8c" text-anchor="middle">0</text>
<rect x="44" y="279.5" width="10" height="0.8" fill="#6a6a6a"/>
<rect x="52.7" y="281.5" width="1.3" height="0.6" fill="#666"/>
<rect x="52.7" y="283.4" width="1.3" height="0.6" fill="#666"/>
<rect x="52.7" y="285.4" width="1.3" height="0.6" fill="#666"/>
<rect x="52.7" y="287.3" width="1.3" height="0.6" fill="#666"/>
<rect x="51.5" y="289.3" width="2.5" height="0.6" fill="#666"/>
<rect x="52.7" y="291.2" width="1.3" height="0.6" fill="#666"/>
<rect x="52.7" y="293.2" width="1.3" height="0.6" fill="#666"/>
<rect x="52.7" y="295.1" width="1.3" height="0.6" fill="#666"/>
<rect x="52.7" y="297.1" width="1.3" height="0.6" fill="#666"/>
<text x="47.5" y="285.7" font-family="Liberation Sans" font-size="5" fill="#8c8c8c" text-anchor="middle">5</text>
<text x="47.5" y="291.3" font-family="Liberation Sans" font-size="5" fill="#8c8c8c" text-anchor="middle">0</text>
<text x="47.5" y="296.9" font-family="Liberation Sans" font-size="5" fill="#8c8c8c" text-anchor="middle">0</text>
<rect x="44" y="299.1" width="10" height="0.8" fill="#6a6a6a"/>
<rect x="52.7" y="301.0" width="1.3" height="0.6" fill="#666"/>
<rect x="52.7" y="303.0" width="1.3" height="0.6" fill="#666"/>
<rect x="52.7" y="304.9" width="1.3" height="0.6" fill="#666"/>
<rect x="52.7" y="306.9" width="1.3" height="0.6" fill="#666"/>
<rect x="51.5" y="308.8" width="2.5" height="0.6" fill="#666"/>
<rect x="52.7" y="310.8" width="1.3" height="0.6" fill="#666"/>
<rect x="52.7" y="312.7" width="1.3" height="0.6" fill="#666"/>
<rect x="52.7" y="314.7" width="1.3" height="0.6" fill="#666"/>
<rect x="52.7" y="316.6" width="1.3" height="0.6" fill="#666"/>
<text x="47.5" y="305.2" font-family="Liberation Sans" font-size="5" fill="#8c8c8c" text-anchor="middle">5</text>
<text x="47.5" y="310.9" font-family="Liberation Sans" font-size="5" fill="#8c8c8c" text-anchor="middle">5</text>
<text x="47.5" y="316.4" font-family="Liberation Sans" font-size="5" fill="#8c8c8c" text-anchor="middle">0</text>
<rect x="44" y="318.6" width="10" height="0.8" fill="#6a6a6a"/>
<rect x="52.7" y="320.6" width="1.3" height="0.6" fill="#666"/>
<rect x="52.7" y="322.5" width="1.3" height="0.6" fill="#666"/>
<rect x="52.7" y="324.5" width="1.3" height="0.6" fill="#666"/>
<rect x="52.7" y="326.4" width="1.3" height="0.6" fill="#666"/>
<rect x="51.5" y="328.4" width="2.5" height="0.6" fill="#666"/>
<rect x="52.7" y="330.3" width="1.3" height="0.6" fill="#666"/>
<rect x="52.7" y="332.3" width="1.3" height="0.6" fill="#666"/>
<rect x="52.7" y="334.2" width="1.3" height="0.6" fill="#666"/>
<rect x="52.7" y="336.2" width="1.3" height="0.6" fill="#666"/>
<text x="47.5" y="324.8" font-family="Liberation Sans" font-size="5" fill="#8c8c8c" text-anchor="middle">6</text>
<text x="47.5" y="330.4" font-family="Liberation Sans" font-size="5" fill="#8c8c8c" text-anchor="middle">0</text>
<text x="47.5" y="336.0" font-family="Liberation Sans" font-size="5" fill="#8c8c8c" text-anchor="middle">0</text>
<rect x="44" y="338.1" width="10" height="0.8" fill="#6a6a6a"/>
<rect x="52.7" y="340.1" width="1.3" height="0.6" fill="#666"/>
<rect x="52.7" y="342.1" width="1.3" height="0.6" fill="#666"/>
<rect x="52.7" y="344.0" width="1.3" height="0.6" fill="#666"/>
<rect x="52.7" y="346.0" width="1.3" height="0.6" fill="#666"/>
<rect x="51.5" y="347.9" width="2.5" height="0.6" fill="#666"/>
<rect x="52.7" y="349.9" width="1.3" height="0.6" fill="#666"/>
<rect x="52.7" y="351.8" width="1.3" height="0.6" fill="#666"/>
<rect x="52.7" y="353.8" width="1.3" height="0.6" fill="#666"/>
<rect x="52.7" y="355.7" width="1.3" height="0.6" fill="#666"/>
<text x="47.5" y="344.3" font-family="Liberation Sans" font-size="5" fill="#8c8c8c" text-anchor="middle">6</text>
<text x="47.5" y="349.9" font-family="Liberation Sans" font-size="5" fill="#8c8c8c" text-anchor="middle">5</text>
<text x="47.5" y="355.5" font-family="Liberation Sans" font-size="5" fill="#8c8c8c" text-anchor="middle">0</text>
<rect x="44" y="357.7" width="10" height="0.8" fill="#6a6a6a"/>
<rect x="52.7" y="359.7" width="1.3" height="0.6" fill="#666"/>
<rect x="52.7" y="361.6" width="1.3" height="0.6" fill="#666"/>
<rect x="52.7" y="363.6" width="1.3" height="0.6" fill="#666"/>
<rect x="52.7" y="365.5" width="1.3" height="0.6" fill="#666"/>
<rect x="51.5" y="367.5" width="2.5" height="0.6" fill="#666"/>
<rect x="52.7" y="369.4" width="1.3" height="0.6" fill="#666"/>
<rect x="52.7" y="371.4" width="1.3" height="0.6" fill="#666"/>
<rect x="52.7" y="373.3" width="1.3" height="0.6" fill="#666"/>
<rect x="52.7" y="375.3" width="1.3" height="0.6" fill="#666"/>
<text x="47.5" y="363.9" font-family="Liberation Sans" font-size="5" fill="#8c8c8c" text-anchor="middle">7</text>
<text x="47.5" y="369.5" font-family="Liberation Sans" font-size="5" fill="#8c8c8c" text-anchor="middle">0</text>
<text x="47.5" y="375.1" font-family="Liberation Sans" font-size="5" fill="#8c8c8c" text-anchor="middle">0</text>
<rect x="44" y="377.2" width="10" height="0.8" fill="#6a6a6a"/>
<rect x="52.7" y="379.2" width="1.3" height="0.6" fill="#666"/>
<rect x="52.7" y="381.2" width="1.3" height="0.6" fill="#666"/>
<rect x="52.7" y="383.1" width="1.3" height="0.6" fill="#666"/>
<rect x="52.7" y="385.1" width="1.3" height="0.6" fill="#666"/>
<rect x="51.5" y="387.0" width="2.5" height="0.6" fill="#666"/>
<rect x="52.7" y="389.0" width="1.3" height="0.6" fill="#666"/>
<rect x="52.7" y="390.9" width="1.3" height="0.6" fill="#666"/>
<rect x="52.7" y="392.9" width="1.3" height="0.6" fill="#666"/>
<rect x="52.7" y="394.8" width="1.3" height="0.6" fill="#666"/>
<text x="47.5" y="383.4" font-family="Liberation Sans" font-size="5" fill="#8c8c8c" text-anchor="middle">7</text>
<text x="47.5" y="389.1" font-family="Liberation Sans" font-size="5" fill="#8c8c8c" text-anchor="middle">5</text>
<text x="47.5" y="394.6" font-family="Liberation Sans" font-size="5" fill="#8c8c8c" text-anchor="middle">0</text>
<rect x="44" y="396.8" width="10" height="0.8" fill="#6a6a6a"/>
<rect x="52.7" y="398.8" width="1.3" height="0.6" fill="#666"/>
<rect x="52.7" y="400.7" width="1.3" height="0.6" fill="#666"/>
<rect x="52.7" y="402.7" width="1.3" height="0.6" fill="#666"/>
<rect x="52.7" y="404.6" width="1.3" height="0.6" fill="#666"/>
<rect x="51.5" y="406.6" width="2.5" height="0.6" fill="#666"/>
<rect x="52.7" y="408.5" width="1.3" height="0.6" fill="#666"/>
<rect x="52.7" y="410.5" width="1.3" height="0.6" fill="#666"/>
<rect x="52.7" y="412.4" width="1.3" height="0.6" fill="#666"/>
<rect x="52.7" y="414.4" width="1.3" height="0.6" fill="#666"/>
<text x="47.5" y="403.0" font-family="Liberation Sans" font-size="5" fill="#8c8c8c" text-anchor="middle">8</text>
<text x="47.5" y="408.6" font-family="Liberation Sans" font-size="5" fill="#8c8c8c" text-anchor="middle">0</text>
<text x="47.5" y="414.2" font-family="Liberation Sans" font-size="5" fill="#8c8c8c" text-anchor="middle">0</text>
<g fill="#d9d9d9" stroke="none"><rect x="7" y="61.05" width="8" height="0.9"/><rect x="10.55" y="57.5" width="0.9" height="8"/><circle cx="7.6" cy="61.5" r="1.4"/><circle cx="14.4" cy="61.5" r="1.4"/><circle cx="11" cy="58.1" r="1.4"/><circle cx="11" cy="64.9" r="1.4"/><circle cx="11" cy="61.5" r="0.9"/></g>
<circle cx="30.8" cy="61.5" r="4.2" fill="none" stroke="#d9d9d9" stroke-width="1.1" stroke-dasharray="1.5 1.1"/>
<ellipse cx="12.5" cy="74.95" rx="3" ry="2.2" fill="none" stroke="#d9d9d9" stroke-width="1.1" transform="rotate(-20 12.5 74.95)"/><path d="M10,76.25 Q8,77.75 9.5,79.25 L7,81.25 M6.5,73.75 L9.5,76.75" fill="none" stroke="#d9d9d9" stroke-width="1"/>
<path d="M27.3,80.75 L32.8,75.25" stroke="#d9d9d9" stroke-width="2.3" stroke-linecap="round"/><circle cx="34.0" cy="73.55" r="0.9" fill="#d9d9d9"/><circle cx="30.6" cy="72.45" r="0.7" fill="#d9d9d9"/><circle cx="35.1" cy="76.95" r="0.7" fill="#d9d9d9"/><circle cx="32.4" cy="71.95" r="0.5" fill="#d9d9d9"/>
<path d="M8,87.0 V95.0 H15 M6,89.0 H14 V97.0" fill="none" stroke="#d9d9d9" stroke-width="1.1"/>
<path d="M26.8,96.0 L32.8,90.0" stroke="#d9d9d9" stroke-width="2" stroke-linecap="round"/><path d="M31.8,88.0 L34.8,91.0" stroke="#d9d9d9" stroke-width="2.2"/><circle cx="34.3" cy="88.5" r="1.3" fill="#d9d9d9"/>
<path d="M8,111.25 L14,104.25" stroke="#d9d9d9" stroke-width="4" stroke-linecap="round"/><path d="M8,111.25 L14,104.25" stroke="#7a7a7a" stroke-width="1" stroke-dasharray="1 1"/>
<path d="M26.8,112.25 Q26.8,108.25 29.8,107.25 L34.8,102.25 L31.8,109.25 Q29.8,112.25 26.8,112.25Z" fill="#d9d9d9"/>
<circle cx="11" cy="120.0" r="2" fill="#d9d9d9"/><rect x="10" y="121.5" width="2" height="2.5" fill="#d9d9d9"/><rect x="7" y="123.5" width="8" height="3" rx="0.5" fill="#d9d9d9"/>
<path d="M27.8,126.5 Q27.8,123.5 29.8,122.5 L34.8,117.5 L31.8,124.5 Q29.8,126.5 27.8,126.5Z" fill="#d9d9d9"/><path d="M25.8,121.5 Q27.8,118.5 30.8,119.5" fill="none" stroke="#d9d9d9" stroke-width="0.9"/>
<path d="M8,141.75 L7,139.75 L12,134.75 L15,137.75 L11,141.75 Z" fill="none" stroke="#d9d9d9" stroke-width="1"/><path d="M12,134.75 L15,137.75 L12.5,140.25 L9.5,137.25Z" fill="#d9d9d9"/><path d="M6,132.75 L9,135.75 M9,132.75 L6,135.75" stroke="#d9d9d9" stroke-width="0.8"/>
<path d="M26.8,136.75 L30.8,132.75 L34.8,136.75 L30.8,140.75 Z" fill="none" stroke="#d9d9d9" stroke-width="1.1"/><path d="M26.8,136.75 L34.8,136.75 L30.8,140.75Z" fill="#d9d9d9"/><circle cx="35.3" cy="140.75" r="1" fill="#d9d9d9"/>
<path d="M11,148.0 Q15,153.0 14,155.0 A3,3 0 0 1 8,155.0 Q7,153.0 11,148.0Z" fill="#d9d9d9"/>
<circle cx="31.8" cy="151.0" r="3" fill="#d9d9d9"/><path d="M29.8,153.0 L26.8,157.0" stroke="#d9d9d9" stroke-width="1"/>
<path d="M7,172.25 L8,168.25 L13,164.25 L15,166.25 L11,171.25 Z" fill="none" stroke="#d9d9d9" stroke-width="1.1"/><circle cx="10.5" cy="168.25" r="0.8" fill="#d9d9d9"/>
<text x="30.8" y="172.45" font-family="Liberation Serif" font-size="11" fill="#e6e6e6" text-anchor="middle">T</text>
<path d="M8,178.5 L8,186.5 L10,184.5 L12,187.5 L13,186.5 L11,183.5 L13,183.5 Z" fill="#222" stroke="#d9d9d9" stroke-width="0.9"/>
<ellipse cx="30.8" cy="183.5" rx="4.5" ry="3.8" fill="#6a6a6a" stroke="#d9d9d9" stroke-width="0.9"/>
<path d="M9,202.75 L6,198.75 Q6,197.75 8,198.75 L9,198.75 L9,194.75 Q10,193.75 11,194.75 L11,193.75 Q12,192.75 13,193.75 L13,194.75 Q14,193.75 15,195.75 L15,200.75 Q14,203.75 11,203.75 Z" fill="#d9d9d9"/>
<circle cx="29.8" cy="197.75" r="3.2" fill="none" stroke="#d9d9d9" stroke-width="1.1"/><path d="M32.1,200.05 L34.8,202.75" stroke="#d9d9d9" stroke-width="1.6"/>
<circle cx="7.5" cy="214.0" r="1.2" fill="#d9d9d9"/>
<circle cx="11" cy="214.0" r="1.2" fill="#d9d9d9"/>
<circle cx="14.5" cy="214.0" r="1.2" fill="#d9d9d9"/>
<path d="M17.6,66.6 L19.4,66.6 L19.4,64.8 Z" fill="#b0b0b0"/>
<path d="M37.1,66.6 L38.9,66.6 L38.9,64.8 Z" fill="#b0b0b0"/>
<path d="M17.6,81.85 L19.4,81.85 L19.4,80.05 Z" fill="#b0b0b0"/>
<path d="M37.1,81.85 L38.9,81.85 L38.9,80.05 Z" fill="#b0b0b0"/>
<path d="M17.6,97.1 L19.4,97.1 L19.4,95.3 Z" fill="#b0b0b0"/>
<path d="M37.1,97.1 L38.9,97.1 L38.9,95.3 Z" fill="#b0b0b0"/>
<path d="M17.6,112.35 L19.4,112.35 L19.4,110.55 Z" fill="#b0b0b0"/>
<path d="M37.1,112.35 L38.9,112.35 L38.9,110.55 Z" fill="#b0b0b0"/>
<path d="M17.6,127.6 L19.4,127.6 L19.4,125.8 Z" fill="#b0b0b0"/>
<path d="M37.1,127.6 L38.9,127.6 L38.9,125.8 Z" fill="#b0b0b0"/>
<path d="M17.6,142.85000000000002 L19.4,142.85000000000002 L19.4,141.05 Z" fill="#b0b0b0"/>
<path d="M37.1,142.85000000000002 L38.9,142.85000000000002 L38.9,141.05 Z" fill="#b0b0b0"/>
<path d="M17.6,158.10000000000002 L19.4,158.10000000000002 L19.4,156.3 Z" fill="#b0b0b0"/>
<path d="M37.1,158.10000000000002 L38.9,158.10000000000002 L38.9,156.3 Z" fill="#b0b0b0"/>
<path d="M17.6,173.35000000000002 L19.4,173.35000000000002 L19.4,171.55 Z" fill="#b0b0b0"/>
<path d="M37.1,173.35000000000002 L38.9,173.35000000000002 L38.9,171.55 Z" fill="#b0b0b0"/>
<path d="M17.6,188.60000000000002 L19.4,188.60000000000002 L19.4,186.8 Z" fill="#b0b0b0"/>
<path d="M37.1,188.60000000000002 L38.9,188.60000000000002 L38.9,186.8 Z" fill="#b0b0b0"/>
<path d="M17.6,203.85000000000002 L19.4,203.85000000000002 L19.4,202.05 Z" fill="#b0b0b0"/>
<path d="M37.1,203.85000000000002 L38.9,203.85000000000002 L38.9,202.05 Z" fill="#b0b0b0"/>
<path d="M17.6,222.3 L19.4,222.3 L19.4,220.5 Z" fill="#b0b0b0"/>
<rect x="19.6" y="235" width="14.5" height="14.5" fill="#fff" stroke="#9a9a9a" stroke-width="0.7"/>
<rect x="11" y="225.6" width="14" height="14.5" fill="#000" stroke="#b8b8b8" stroke-width="0.8"/>
<path d="M31,226.3 H32.2 Q33.6,226.3 33.6,227.7 V229" fill="none" stroke="#d9d9d9" stroke-width="0.9"/><path d="M29.6,226.3 L31.4,225 V227.6Z M33.6,230.4 L32.3,228.6 H34.9Z" fill="#d9d9d9"/>
<rect x="12.3" y="246.3" width="3.4" height="3.4" fill="#d9d9d9"/><rect x="9.8" y="243.8" width="3.4" height="3.4" fill="#111" stroke="#d9d9d9" stroke-width="0.8"/>
<rect x="6" y="257.5" width="10" height="8" fill="none" stroke="#d9d9d9" stroke-width="0.9"/><circle cx="11" cy="261.5" r="2" fill="none" stroke="#d9d9d9" stroke-width="0.9"/>
<rect x="28" y="257.5" width="7" height="6" fill="none" stroke="#d9d9d9" stroke-width="0.9"/><rect x="25.5" y="259.5" width="7" height="6" fill="#535353" stroke="#d9d9d9" stroke-width="0.9"/>
<path d="M36.6,268.8 L38.4,268.8 L38.4,267 Z" fill="#b0b0b0"/>
<path d="M3.5,40.5 L5.6,39 V42Z M6.1,40.5 L8.2,39 V42Z" fill="#d0d0d0"/>
<rect x="2" y="20" width="1" height="14" fill="#4c4c4c"/><rect x="4" y="20" width="1" height="14" fill="#4c4c4c"/>
<text x="18.2" y="31.4" font-family="Liberation Serif" font-size="12" fill="#ececec" stroke="#ececec" stroke-width="0.15" text-anchor="middle">T</text>
<path d="M26.0,26.2 L28.2,28.400000000000002 L30.4,26.2" fill="none" stroke="#bbbbbb" stroke-width="0.8"/>
<path d="M45.5,23 V30" stroke="#d9d9d9" stroke-width="0.9"/><path d="M44,28.5 L45.5,30.5 L47,28.5" fill="#d9d9d9"/>
<text x="50.5" y="29.5" font-family="Liberation Serif" font-size="9" fill="#d9d9d9" text-anchor="middle">T</text>
<path d="M47,31 H53" stroke="#d9d9d9" stroke-width="0.9"/><path d="M52,29.5 L54,31 L52,32.5" fill="#d9d9d9"/>
<path d="M144.8,26.4 L147,28.6 L149.2,26.4" fill="none" stroke="#bbbbbb" stroke-width="0.8"/>
<path d="M191.8,26.4 L194,28.6 L196.2,26.4" fill="none" stroke="#6a6a6a" stroke-width="0.8"/>
<text x="209.5" y="31.5" font-family="Liberation Serif" font-size="7" fill="#d9d9d9" text-anchor="middle">T</text>
<text x="214" y="31.5" font-family="Liberation Serif" font-size="12" fill="#d9d9d9" text-anchor="middle">T</text>
<path d="M259.3,26.4 L261.5,28.6 L263.7,26.4" fill="none" stroke="#bbbbbb" stroke-width="0.8"/>
<text x="275" y="28.5" font-family="Liberation Sans" font-size="7.5" fill="#d9d9d9" text-anchor="middle">a</text><text x="279" y="31.5" font-family="Liberation Sans" font-size="6.5" fill="#d9d9d9" text-anchor="middle">a</text>
<path d="M338.8,26.2 L341,28.400000000000002 L343.2,26.2" fill="none" stroke="#bbbbbb" stroke-width="0.8"/>
<rect x="356.60" y="22" width="8.4" height="2.25" fill="#bdbdbd"/>
<rect x="356.60" y="24.2" width="5.8" height="2.25" fill="#bdbdbd"/>
<rect x="356.60" y="26.4" width="8.4" height="2.25" fill="#bdbdbd"/>
<rect x="356.60" y="28.6" width="5.8" height="2.25" fill="#bdbdbd"/>
<rect x="371.80" y="22" width="8.4" height="2.25" fill="#bdbdbd"/>
<rect x="373.10" y="24.2" width="5.8" height="2.25" fill="#bdbdbd"/>
<rect x="371.80" y="26.4" width="8.4" height="2.25" fill="#bdbdbd"/>
<rect x="373.10" y="28.6" width="5.8" height="2.25" fill="#bdbdbd"/>
<rect x="386.30" y="22" width="8.4" height="2.25" fill="#bdbdbd"/>
<rect x="388.90" y="24.2" width="5.8" height="2.25" fill="#bdbdbd"/>
<rect x="386.30" y="26.4" width="8.4" height="2.25" fill="#bdbdbd"/>
<rect x="388.90" y="28.6" width="5.8" height="2.25" fill="#bdbdbd"/>
<text x="437.3" y="27.6" font-family="Liberation Serif" font-weight="bold" font-size="7.5" fill="#e0e0e0" text-anchor="middle">T</text><path d="M433.5,31.5 Q437.5,27.8 441.5,31.5" fill="none" stroke="#d9d9d9" stroke-width="0.9"/>
<rect x="457" y="23" width="9" height="8" fill="#e4e4e4"/><rect x="457" y="21.8" width="4" height="1.5" fill="#e4e4e4"/><rect x="458.5" y="25.2" width="6" height="4.6" fill="#a8a8a8"/>
<text x="480.4" y="31" font-family="Liberation Sans" font-weight="bold" font-size="11" fill="#dedede" textLength="9.4" lengthAdjust="spacingAndGlyphs">3D</text>
<path d="M791.3,25.4 L793.5,27.6 L795.7,25.4" fill="none" stroke="#bbbbbb" stroke-width="0.8"/>
<rect x="745" y="6" width="5" height="1" fill="#d9d9d9"/>
<rect x="762" y="2.5" width="5" height="4" fill="none" stroke="#d9d9d9" stroke-width="0.8"/><rect x="760" y="4.5" width="5" height="4" fill="#535353" stroke="#d9d9d9" stroke-width="0.8"/>
<path d="M783,2.5 L788,7.5 M788,2.5 L783,7.5" stroke="#d9d9d9" stroke-width="1"/>
<path d="M592,40.5 L594.3,38.8 V42.2Z M594.8,40.5 L597.1,38.8 V42.2Z" fill="#d0d0d0"/>
<path d="M798,40.5 L795.7,38.8 V42.2Z M795.2,40.5 L792.9,38.8 V42.2Z" fill="#d0d0d0"/>
<path d="M585,53.5 L593,58 L585,62.5 Z" fill="#d9d9d9"/>
<rect x="586.5" y="80" width="5" height="6" fill="#d9d9d9"/><path d="M587,80 L585.5,75.5 M589,80 V75 M591,80 L592.5,76" stroke="#d9d9d9" stroke-width="0.9"/>
<path d="M584,95.5 H594 M584,100.5 H594" stroke="#d9d9d9" stroke-width="0.9"/><circle cx="586" cy="95.5" r="1.4" fill="#d9d9d9"/><circle cx="592.5" cy="100.5" r="1.6" fill="#d9d9d9"/>
<circle cx="611" cy="70.3" r="1.8" fill="none" stroke="#d9d9d9" stroke-width="0.9"/><path d="M609.7,71.7 L607.8,73.6" stroke="#d9d9d9" stroke-width="1"/>
<path d="M670.3,70.2 L672.5,72.39999999999999 L674.7,70.2" fill="none" stroke="#bbbbbb" stroke-width="0.8"/>
<rect x="702" y="67.5" width="8" height="7" fill="#3a3a3a" stroke="#d9d9d9" stroke-width="1"/><rect x="704" y="70.5" width="4" height="2" fill="#d9d9d9"/>
<circle cx="720.3" cy="71" r="3.3" fill="#d9d9d9"/><path d="M718,73.3 L722.6,68.7 A3.3,3.3 0 0 1 718,73.3Z" fill="#555"/>
<text x="734" y="75" font-family="Liberation Serif" font-weight="bold" font-size="9" fill="#d9d9d9" text-anchor="middle">T</text>
<rect x="745.8" y="68.2" width="5.6" height="5.6" fill="none" stroke="#d9d9d9" stroke-width="0.9"/><rect x="744.8" y="67.2" width="2" height="2" fill="#d9d9d9"/><rect x="744.8" y="72.8" width="2" height="2" fill="#d9d9d9"/><rect x="750.4" y="67.2" width="2" height="2" fill="#d9d9d9"/><rect x="750.4" y="72.8" width="2" height="2" fill="#d9d9d9"/>
<path d="M760,67.5 H764 L766,69.5 V74.5 H760 Z" fill="none" stroke="#d9d9d9" stroke-width="0.9"/><rect x="759.4" y="71" width="4" height="3.5" fill="#d9d9d9"/>
<circle cx="795.5" cy="68.5" r="2.5" fill="#e8e8e8"/><rect x="794" y="71" width="3" height="5" rx="1.5" fill="#3a3a3a"/>
<path d="M708.8,85.9 L711,88.1 L713.2,85.9" fill="none" stroke="#bbbbbb" stroke-width="0.8"/>
<path d="M791.8,85.7 L794,87.89999999999999 L796.2,85.7" fill="none" stroke="#bbbbbb" stroke-width="0.8"/>
<path d="M791.8,101.7 L794,103.89999999999999 L796.2,101.7" fill="none" stroke="#bbbbbb" stroke-width="0.8"/>
<rect x="791" y="50.10" width="6.5" height="0.8" fill="#909090"/><rect x="791" y="51.35" width="6.5" height="0.8" fill="#909090"/><rect x="791" y="52.60" width="6.5" height="0.8" fill="#909090"/><rect x="791" y="53.85" width="6.5" height="0.8" fill="#909090"/>
<rect x="791" y="242.60" width="6.5" height="0.8" fill="#909090"/><rect x="791" y="243.85" width="6.5" height="0.8" fill="#909090"/><rect x="791" y="245.10" width="6.5" height="0.8" fill="#909090"/><rect x="791" y="246.35" width="6.5" height="0.8" fill="#909090"/>
<rect x="640.8" y="99.8" width="6.6" height="6.2" fill="none" stroke="#b0b0b0" stroke-width="0.7"/>
<rect x="641.2" y="100.2" width="2" height="1.8" fill="#cfcfcf"/><rect x="641.2" y="103.8" width="2" height="1.8" fill="#cfcfcf"/><rect x="643.2" y="102.0" width="2" height="1.8" fill="#cfcfcf"/><rect x="645.2" y="100.2" width="2" height="1.8" fill="#cfcfcf"/><rect x="645.2" y="103.8" width="2" height="1.8" fill="#cfcfcf"/>
<path d="M654.3,106 L660.3,99.8" stroke="#c8c8c8" stroke-width="1"/><path d="M653.5,106.6 L654.2,104.8 L655.6,106 Z" fill="#c8c8c8"/>
<path d="M666,102.8 H673.4 M669.7,99.3 V106.3" stroke="#d9d9d9" stroke-width="0.9"/><path d="M665.6,102.8 L667.2,101.5 V104.1Z M673.8,102.8 L672.2,101.5 V104.1Z M669.7,99 L668.4,100.6 H671Z M669.7,106.7 L668.4,105.1 H671Z" fill="#d9d9d9"/>
<path d="M681.5,100.5 V105.5 H686.5 M680,101.8 H684 Q686,102 686,104" fill="none" stroke="#d9d9d9" stroke-width="0.9"/>
<rect x="692.6" y="102.3" width="6.6" height="4.4" fill="#e8e8e8"/><path d="M694,102.3 V101 A1.9,1.9 0 0 1 697.8,101 V102.3" fill="none" stroke="#e8e8e8" stroke-width="1"/><rect x="695.4" y="103.6" width="1" height="1.6" fill="#666"/>
<path d="M606.9,122.8 Q611,118.39999999999999 615.1,122.8 Q611,127.2 606.9,122.8Z" fill="#ececec"/><circle cx="611" cy="122.8" r="1.4" fill="#555"/>
<path d="M606.9,170 Q611,165.6 615.1,170 Q611,174.4 606.9,170Z" fill="#ececec"/><circle cx="611" cy="170" r="1.4" fill="#555"/>
<text x="631" y="126" font-family="Liberation Serif" font-size="9" fill="#d9d9d9" text-anchor="middle">T</text><path d="M627,127 Q631,123.5 635,127" fill="none" stroke="#d9d9d9" stroke-width="0.9"/>
<rect x="620.3" y="135.4" width="21" height="20.2" fill="#5f5f5f" stroke="#9a9a9a" stroke-width="0.7"/>
<path d="M620.3,139 V135.4 H624 M637.6,135.4 H641.3 V139 M641.3,152 V155.6 H637.6 M624,155.6 H620.3 V152" fill="none" stroke="#e0e0e0" stroke-width="1"/>
<text x="630.8" y="149.2" font-family="Liberation Serif" font-size="12" fill="#e8e8e8" text-anchor="middle">T</text>
<path d="M684,225.8 H683.2 A1.7,1.7 0 0 0 683.2,229.2 H684 M686.6,225.8 H687.4 A1.7,1.7 0 0 1 687.4,229.2 H686.6 M684.3,227.5 H686.3" fill="none" stroke="#7e7e7e" stroke-width="0.9"/>
<text x="697.5" y="230.5" font-family="Liberation Serif" font-style="italic" font-size="9" fill="#d9d9d9">fx</text>
<path d="M706.1,233.3 L707.9,233.3 L707.9,231.5 Z" fill="#b0b0b0"/>
<rect x="712.5" y="224.3" width="8.2" height="6.4" fill="#d9d9d9"/><circle cx="716.6" cy="227.5" r="2" fill="#555"/>
<circle cx="733" cy="227.5" r="3.4" fill="#d9d9d9"/><path d="M730.6,229.9 L735.4,225.1 A3.4,3.4 0 0 1 730.6,229.9Z" fill="#555"/>
<path d="M737.6,233.3 L739.4,233.3 L739.4,231.5 Z" fill="#b0b0b0"/>
<path d="M744.7,224.3 H748 L749,225.3 H752.2 V230.7 H744.7Z" fill="#d9d9d9"/>
<path d="M761.2,224.5 H768 V230.7 H763.5 L761.2,228.4Z" fill="#d9d9d9"/><rect x="762.5" y="226" width="4" height="3" fill="#555"/>
<rect x="777.3" y="225.6" width="5.8" height="5.4" rx="0.6" fill="#8e8e8e"/><rect x="777" y="224.2" width="6.4" height="1" fill="#8e8e8e"/><rect x="779" y="223.5" width="2.6" height="0.9" fill="#8e8e8e"/>
<path d="M604.5,270.5 Q604.5,268 606.5,267 L612,262 L609,268.5 Q607,271 604.5,270.5Z" fill="#d9d9d9"/><path d="M605,264.5 Q607,262 609,263" fill="none" stroke="#d9d9d9" stroke-width="0.8"/>
<rect x="617" y="257.5" width="17.5" height="17.5" fill="#fff"/>
<rect x="617.0" y="260.0" width="2.5" height="2.5" fill="#cccccc"/><rect x="617.0" y="265.0" width="2.5" height="2.5" fill="#cccccc"/><rect x="617.0" y="270.0" width="2.5" height="2.5" fill="#cccccc"/><rect x="619.5" y="257.5" width="2.5" height="2.5" fill="#cccccc"/><rect x="619.5" y="262.5" width="2.5" height="2.5" fill="#cccccc"/><rect x="619.5" y="267.5" width="2.5" height="2.5" fill="#cccccc"/><rect x="619.5" y="272.5" width="2.5" height="2.5" fill="#cccccc"/><rect x="622.0" y="260.0" width="2.5" height="2.5" fill="#cccccc"/><rect x="622.0" y="265.0" width="2.5" height="2.5" fill="#cccccc"/><rect x="622.0" y="270.0" width="2.5" height="2.5" fill="#cccccc"/><rect x="624.5" y="257.5" width="2.5" height="2.5" fill="#cccccc"/><rect x="624.5" y="262.5" width="2.5" height="2.5" fill="#cccccc"/><rect x="624.5" y="267.5" width="2.5" height="2.5" fill="#cccccc"/><rect x="624.5" y="272.5" width="2.5" height="2.5" fill="#cccccc"/><rect x="627.0" y="260.0" width="2.5" height="2.5" fill="#cccccc"/><rect x="627.0" y="265.0" width="2.5" height="2.5" fill="#cccccc"/><rect x="627.0" y="270.0" width="2.5" height="2.5" fill="#cccccc"/><rect x="629.5" y="257.5" width="2.5" height="2.5" fill="#cccccc"/><rect x="629.5" y="262.5" width="2.5" height="2.5" fill="#cccccc"/><rect x="629.5" y="267.5" width="2.5" height="2.5" fill="#cccccc"/><rect x="629.5" y="272.5" width="2.5" height="2.5" fill="#cccccc"/><rect x="632.0" y="260.0" width="2.5" height="2.5" fill="#cccccc"/><rect x="632.0" y="265.0" width="2.5" height="2.5" fill="#cccccc"/><rect x="632.0" y="270.0" width="2.5" height="2.5" fill="#cccccc"/>
<rect x="620.5" y="281.6" width="8" height="8.5" fill="#8a8a8a" stroke="#d9d9d9" stroke-width="0.9"/><rect x="620.5" y="281.1" width="3.5" height="1.5" fill="#d9d9d9"/>
<path d="M620.5,299.2 L624,295.7 L627.5,299.2 L624,302.7 Z" fill="none" stroke="#d9d9d9" stroke-width="1"/><path d="M620.5,299.2 L627.5,299.2 L624,302.7Z" fill="#d9d9d9"/><path d="M621.5,294.7 L623,296.2" stroke="#d9d9d9" stroke-width="0.9"/><circle cx="628.5" cy="301.7" r="0.9" fill="#d9d9d9"/>
<text x="624.5" y="317.0" font-family="Liberation Serif" font-weight="bold" font-size="11" fill="#d9d9d9" text-anchor="middle">T</text>
<text x="624.5" y="330.59999999999997" font-family="Liberation Serif" font-weight="bold" font-size="11" fill="#d9d9d9" text-anchor="middle">T</text>
<rect x="620.5" y="336" width="8" height="8.5" fill="#8a8a8a" stroke="#d9d9d9" stroke-width="0.9"/><rect x="620.5" y="335.5" width="3.5" height="1.5" fill="#d9d9d9"/>
<rect x="744.5" y="416.5" width="4.5" height="6" fill="#d9d9d9"/><path d="M741,420 L743,418.5 L744.5,420 L743,421.5Z M742,417 L743.5,418.5 M740.5,421.5 L742,420.5" fill="#d9d9d9" stroke="#d9d9d9" stroke-width="0.7"/>
<rect x="760" y="417" width="8" height="5.8" rx="0.6" fill="#d9d9d9"/><circle cx="764" cy="419.9" r="1.6" fill="#555"/><rect x="762.3" y="416" width="3.4" height="1.5" fill="#d9d9d9"/>
<rect x="777.5" y="417.5" width="5.6" height="5.5" rx="0.6" fill="#9a9a9a"/><rect x="777" y="416" width="6.6" height="1" fill="#9a9a9a"/><rect x="779" y="415.3" width="2.6" height="0.9" fill="#9a9a9a"/>
<rect x="73" y="419.5" width="6" height="5" fill="none" stroke="#d9d9d9" stroke-width="0.9"/><path d="M76.5,421.5 L80,418.5 M78,418.3 H80.2 V420.5" fill="none" stroke="#d9d9d9" stroke-width="0.9"/>
<line x1="437.8" y1="31" x2="507" y2="159" stroke="#dc1419" stroke-width="2.9" stroke-linecap="round"/>
<ellipse cx="438.8" cy="34" rx="2.3" ry="4.2" transform="rotate(-28 438.8 34)" fill="#e0141a"/>
<rect x="608.7" y="132.8" width="66.5" height="24.2" fill="none" stroke="#d8141c" stroke-width="2.4"/>
<path d="M606.4,145.6 Q610.5,141.2 614.6,145.6 Q610.5,150.0 606.4,145.6Z" fill="#ececec"/><circle cx="610.5" cy="145.6" r="1.4" fill="#555"/>
</svg>
</body></html>
